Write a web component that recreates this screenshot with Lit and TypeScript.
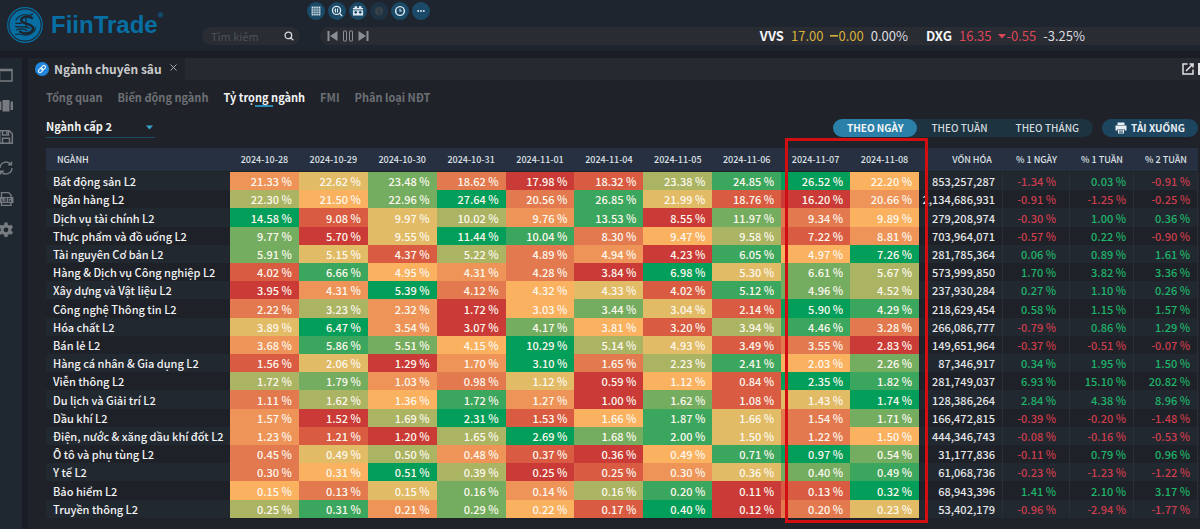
import { LitElement, html, css, svg, nothing } from "lit";
import { customElement, state } from "lit/decorators.js";
import { classMap } from "lit/directives/class-map.js";

interface Sector {
  name: string;
  weights: number[];
  cap: number;
  changes: number[];
}

const DATES = [
  "2024-10-28", "2024-10-29", "2024-10-30", "2024-10-31", "2024-11-01",
  "2024-11-04", "2024-11-05", "2024-11-06", "2024-11-07", "2024-11-08",
];

const sector = (name: string, weights: number[], cap: number, changes: number[]): Sector => ({ name, weights, cap, changes });

const SECTORS: Sector[] = [
  sector("Bất động sản L2", [21.33, 22.62, 23.48, 18.62, 17.98, 18.32, 23.38, 24.85, 26.52, 22.2], 853257287, [-1.34, 0.03, -0.91]),
  sector("Ngân hàng L2", [22.3, 21.5, 22.96, 27.64, 20.56, 26.85, 21.99, 18.76, 16.2, 20.66], 2134686931, [-0.91, -1.25, -0.25]),
  sector("Dịch vụ tài chính L2", [14.58, 9.08, 9.97, 10.02, 9.76, 13.53, 8.55, 11.97, 9.34, 9.89], 279208974, [-0.3, 1.0, 0.36]),
  sector("Thực phẩm và đồ uống L2", [9.77, 5.7, 9.55, 11.44, 10.04, 8.3, 9.47, 9.58, 7.22, 8.81], 703964071, [-0.57, 0.22, -0.9]),
  sector("Tài nguyên Cơ bản L2", [5.91, 5.15, 4.37, 5.22, 4.89, 4.94, 4.23, 6.05, 4.97, 7.26], 281785364, [0.06, 0.89, 1.61]),
  sector("Hàng & Dịch vụ Công nghiệp L2", [4.02, 6.66, 4.95, 4.31, 4.28, 3.84, 6.98, 5.3, 6.61, 5.67], 573999850, [1.7, 3.82, 3.36]),
  sector("Xây dựng và Vật liệu L2", [3.95, 4.31, 5.39, 4.12, 4.32, 4.33, 4.02, 5.12, 4.96, 4.52], 237930284, [0.27, 1.1, 0.26]),
  sector("Công nghệ Thông tin L2", [2.22, 3.23, 2.32, 1.72, 3.03, 3.44, 3.04, 2.14, 5.9, 4.29], 218629454, [0.58, 1.15, 1.57]),
  sector("Hóa chất L2", [3.89, 6.47, 3.54, 3.07, 4.17, 3.81, 3.2, 3.94, 4.46, 3.28], 266086777, [-0.79, 0.86, 1.29]),
  sector("Bán lẻ L2", [3.68, 5.86, 5.51, 4.15, 10.29, 5.14, 4.93, 3.49, 3.55, 2.83], 149651964, [-0.37, -0.51, -0.07]),
  sector("Hàng cá nhân & Gia dụng L2", [1.56, 2.06, 1.29, 1.7, 3.1, 1.65, 2.23, 2.41, 2.03, 2.26], 87346917, [0.34, 1.95, 1.5]),
  sector("Viễn thông L2", [1.72, 1.79, 1.03, 0.98, 1.122, 0.59, 1.118, 0.84, 2.35, 1.82], 281749037, [6.93, 15.1, 20.82]),
  sector("Du lịch và Giải trí L2", [1.11, 1.618, 1.36, 1.72, 1.27, 1.0, 1.622, 1.08, 1.43, 1.74], 128386264, [2.84, 4.38, 8.96]),
  sector("Dầu khí L2", [1.57, 1.52, 1.69, 2.31, 1.53, 1.658, 1.87, 1.662, 1.54, 1.71], 166472815, [-0.39, -0.2, -1.48]),
  sector("Điện, nước & xăng dầu khí đốt L2", [1.23, 1.21, 1.2, 1.65, 2.69, 1.68, 2.0, 1.502, 1.22, 1.498], 444346743, [-0.08, -0.16, -0.53]),
  sector("Ô tô và phụ tùng L2", [0.45, 0.492, 0.5, 0.48, 0.37, 0.36, 0.488, 0.71, 0.97, 0.54], 31177836, [-0.11, 0.79, 0.96]),
  sector("Y tế L2", [0.298, 0.31, 0.51, 0.39, 0.248, 0.252, 0.302, 0.36, 0.4, 0.49], 61068736, [-0.23, -1.23, -1.22]),
  sector("Bảo hiểm L2", [0.148, 0.132, 0.152, 0.162, 0.14, 0.158, 0.2, 0.11, 0.128, 0.32], 68943396, [1.41, 2.1, 3.17]),
  sector("Truyền thông L2", [0.25, 0.31, 0.21, 0.29, 0.22, 0.17, 0.4, 0.12, 0.2, 0.23], 53402179, [-0.96, -2.94, -1.77]),
];

/* Position of each value among its row's values, lowest first. */
const ranks = (values: number[]) => values.map((v) => values.filter((o) => o < v).length);

const FONT = css`"Noto Sans CJK SC", "Noto Sans", sans-serif`;

const toolIcons = [
  { label: "Bảng giá", off: false, art: svg`<path fill="#dfe9ef" d="M3 3h10v10H3z"/><path stroke="#1b4a68" stroke-width=".8" d="M3 5.6h10M3 8.1h10M3 10.6h10M5.5 3v10M8 3v10M10.5 3v10"/>` },
  { label: "Tra cứu", off: false, art: svg`<g fill="none" stroke="#dfe9ef" stroke-width="1.5"><circle cx="7.5" cy="7.3" r="4.6"/><path d="M10.9 10.7l3 3"/><path stroke-width="1.2" d="M6.2 5v4.600M8.600 5v4.600M5.200 7.200h1.800"/></g>` },
  { label: "Bộ lọc", off: false, art: svg`<path fill="#dfe9ef" d="M4 2.500h3v2h2v-2h3v2h1.800v8.600H2.200V4.500H4z"/><circle cx="5.400" cy="9.500" r="1.500" fill="#1b4a68"/><circle cx="10.600" cy="9.500" r="1.500" fill="#1b4a68"/><path stroke="#1b4a68" d="M2.200 6.700h11.600"/>` },
  { label: "Thông tin", off: true, art: svg`<circle cx="8" cy="8" r="4.800" fill="#3a4149"/><path stroke="#1d3343" stroke-width="1.400" d="M8 5v1.400M8 7.300v4"/>` },
  { label: "Lịch sử", off: false, art: svg`<g fill="none" stroke="#dfe9ef" stroke-width="1.700"><circle cx="8" cy="8" r="5"/><path stroke-width="1.200" d="M8 5.500V8h2"/></g>` },
  { label: "Thêm", off: false, art: svg`<g fill="#dfe9ef"><circle cx="4.800" cy="8" r="1.100"/><circle cx="8" cy="8" r="1.100"/><circle cx="11.200" cy="8" r="1.100"/></g>` },
];

const sideIcons = [
  { label: "Cửa sổ", art: svg`<path fill="none" stroke="currentColor" stroke-width="1.500" d="M1.500 2.500h12.500v11.500H1.500zM1.500 3.400h12.500"/>` },
  { label: "Bố cục", art: svg`<path fill="currentColor" d="M4.500 2h7v11.500h-7zM1 3.500h2.400v8.500H1zM12.600 3.500H15v8.500h-2.400z"/>` },
  { label: "Lưu", art: svg`<g fill="none" stroke="currentColor" stroke-width="1.500"><path d="M1.700 1.700h9.600l3 3v9.600H1.700z"/><path d="M4.500 2v4h6V2M4.500 14V9.200h7V14M8.800 2.500v2.200"/></g>` },
  { label: "Làm mới", art: svg`<g fill="none" stroke="currentColor" stroke-width="1.400"><path d="M2 8a6.100 6.100 0 0 1 10.800-3.700M14 8A6.100 6.100 0 0 1 3.200 11.700"/><path d="M13.500 1.500v3.300h-3.300M2.500 14.500v-3.300h3.300"/></g>` },
  { label: "Nhật ký", art: svg`<path fill="none" stroke="currentColor" stroke-width="1.400" d="M3.500 6V1.600h7l2.500 2.500V6M3.500 12v2.400H13V12"/><path fill="currentColor" d="M1 6h14.500v6H1z"/><path fill="none" stroke="#1f2731" stroke-width=".800" d="M4 7.500v3h1.800M7 7.500h1.500v3H7zM12.500 7.500h-2v3h2V9"/>` },
  { label: "Cài đặt", art: svg`<path fill="currentColor" fill-rule="evenodd" d="M6.500 .600h3l.4 2.100 1.500.9 2.100-.8 1.500 2.600-1.700 1.400v2l1.700 1.400-1.500 2.600-2.100-.8-1.500.9-.4 2.100h-3l-.4-2.100-1.500-.9-2.100.8L1 10.200l1.700-1.400v-2L1 5.400l1.500-2.600 2.100.8 1.500-.9zM8 5.400A2.400 2.400 0 1 0 8 10.200 2.400 2.400 0 1 0 8 5.400z"/>` },
];

@customElement("trade-header")
class TradeHeader extends LitElement {
  static styles = css`
    :host { display: flex; align-items: flex-start; height: 51px; background: #1e252f; overflow: hidden; }
    button { font: inherit; color: inherit; background: none; border: 0; padding: 0; margin: 0; }
    svg { display: block; }
    .brand { display: flex; align-items: center; gap: 8px; width: 195px; padding: 6px 0 0 7px; text-decoration: none; color: #076fa3; flex: none; }
    .wordmark { font: bold 24px/38px "Liberation Sans", sans-serif; display: flex; }
    .reg { font-size: 8px; line-height: 16px; padding-top: 2px; }
    .body { flex: 1; min-width: 0; display: flex; flex-direction: column; gap: 7px; padding-top: 2px; }
    .tools { display: flex; gap: 3px; padding-left: 105px; }
    .tool { width: 18px; height: 18px; border-radius: 50%; background: #1b4a68; display: grid; place-items: center; }
    .off { background: #1d3343; }
    .bar { display: flex; gap: 20px; }
    .search { display: flex; align-items: center; width: 98px; height: 18px; border-radius: 9px; background: #292c33; flex: none; }
    .field { flex: 1; min-width: 0; border: 0; outline: 0; background: none; color: #c5c8cc; font: inherit; line-height: 18px; padding: 0 0 0 9px; }
    .field::placeholder { color: #4d5156; opacity: 1; }
    .go { width: 23px; display: grid; place-items: center; }
    .ticker { flex: 1; min-width: 0; display: flex; align-items: center; height: 18px; border-radius: 9px 0 0 9px; background: #292c33; padding: 0 115px 0 7px; }
    .controls { display: flex; gap: 4px; flex: 1; color: #8b8e92; }
    .quotes { display: flex; gap: 18px; font-size: 13px; line-height: 18px; color: #dcdee0; white-space: nowrap; }
    .quote { display: flex; gap: 7px; }
    .code { font-weight: bold; color: #f4f5f6; }
    .move { display: flex; align-items: center; }
    .flat { color: #d9b13c; }
    .down { color: #dd4557; }
  `;

  render() {
    return html`
      <a class="brand" href="#" aria-label="FiinTrade">
        <svg width="36" height="36" viewBox="0 0 36 36">
          <circle cx="18" cy="18" r="17.300" fill="none" stroke="#076fa3" stroke-width="1.200"/>
          <circle cx="18" cy="18" r="15.600" fill="#076fa3"/>
          <g fill="none" stroke="#1b2630" stroke-linecap="round" stroke-linejoin="round">
            <path stroke-width="2.400" d="M25 11c-3-2-9-1.500-10.500 1-1.300 2.700 2.200 3.800 5.500 4.800 4.600 1.300 7.600 3.400 5.200 7-2.400 3.300-8.600 3.400-12.200.8"/>
            <path stroke-width="1.200" d="M9 13c2.800-4.500 7.400-6 12-4.800 2 .4 3.500-.2 4.800-1.400M8.500 19.400c3.500 1.400 9.300-.9 14.300 1.800M9.500 23c3.400-1.600 7.300-1.300 10.500.6M8.500 27.500c4.400-2 7.500 1.800 12.500.4 4.300-1.200 7.500-3.800 7.300-7.500M19 11v10M9 16.400h5.500"/>
          </g>
        </svg>
        <span class="wordmark">FiinTrade<span class="reg">®</span></span>
      </a>
      <div class="body">
        <div class="tools">
          ${toolIcons.map((t) => html`
            <button class=${classMap({ tool: true, off: t.off })} aria-label=${t.label}>
              <svg width="14" height="14" viewBox="0 0 16 16">${t.art}</svg>
            </button>`)}
        </div>
        <div class="bar">
          <div class="search">
            <input class="field" type="search" placeholder="Tìm kiếm" aria-label="Tìm kiếm" />
            <button class="go" aria-label="Tìm">
              <svg width="10" height="10" viewBox="0 0 10 10" fill="none" stroke="#d5d8da" stroke-width="1.300"><circle cx="4.400" cy="4.400" r="3.300"/><path d="M6.900 6.900L9.300 9.300"/></svg>
            </button>
          </div>
          <div class="ticker">
            <div class="controls">
              <button aria-label="Trước"><svg width="11" height="12" viewBox="0 0 11 12" fill="currentColor"><path d="M.500 1h2v10h-2zM10.500 1v10L3 6z"/></svg></button>
              <button aria-label="Tạm dừng"><svg width="12" height="12" viewBox="0 0 12 12" fill="none" stroke="currentColor"><rect x="1.500" y="1" width="3" height="10" rx=".500"/><rect x="7.500" y="1" width="3" height="10" rx=".500"/></svg></button>
              <button aria-label="Sau"><svg width="11" height="12" viewBox="0 0 11 12" fill="currentColor"><path d="M8.500 1h2v10h-2zM.500 1v10L8 6z"/></svg></button>
            </div>
            <div class="quotes">
              <div class="quote">
                <span class="code">VVS</span><span class="flat">17.00</span>
                <span class="move flat"><svg width="8" height="10" viewBox="0 0 8 10"><path d="M0 4h8v1.600H0z" fill="currentColor"/></svg>0.00</span>
                <span>0.00%</span>
              </div>
              <div class="quote">
                <span class="code">DXG</span><span class="down">16.35</span>
                <span class="move down"><svg width="8" height="10" viewBox="0 0 8 10"><path d="M0 3h8L4 7.500z" fill="currentColor"/></svg>-0.55</span>
                <span>-3.25%</span>
              </div>
            </div>
          </div>
        </div>
      </div>
    `;
  }
}

@customElement("weight-table")
class WeightTable extends LitElement {
  static styles = css`
    :host { display: flex; position: relative; flex: 1; }
    .grid { width: 100%; table-layout: fixed; border-collapse: separate; border-spacing: 0; font-size: 11px; line-height: 16px; color: #e4e6e8; white-space: nowrap; }
    .c-name { width: 184px; }
    .c-cap { width: 84px; }
    .c-wide { width: 67px; }
    .c-change { width: 64px; }
    th, td { padding: 0; }
    .head { height: 23px; background: #263041; color: #dfe2e6; font-size: 9px; font-weight: 500; line-height: 16px; text-align: center; border-bottom: 1px solid #1f2228; }
    .first { text-align: left; padding-left: 11px; }
    .cap { padding-left: 22px; }
    .row:nth-child(odd) { background: #222830; }
    .row:nth-child(even) { background: #1e2127; }
    .name { text-align: left; font-weight: 500; color: #f2f3f4; padding-left: 7px; }
    .num { text-align: right; padding-right: 7px; font-weight: 500; }
    .edge { border-right: 1px solid #2a2f37; }
    .wide { padding-right: 13px; }
    .up { color: #1fb46a; }
    .down { color: #cc3d4d; }
    .cell { color: #fdf8ee; }
    .r0 { background: #ca3a36; }
    .r1 { background: #d95b42; }
    .r2 { background: #e3794e; }
    .r3 { background: #ee9458; }
    .r4 { background: #fab160; }
    .r5 { background: #e1bb65; }
    .r6 { background: #aab462; }
    .r7 { background: #74ad60; }
    .r8 { background: #3ba65d; }
    .r9 { background: #029e5a; }
    .marker { position: absolute; top: -10px; bottom: -5px; left: 739px; width: 137px; border: 3px solid #d00f12; pointer-events: none; }
  `;

  render() {
    return html`
      <table class="grid">
        <colgroup>
          <col class="c-name" />
          ${DATES.map(() => html`<col />`)}
          <col class="c-cap" /><col class="c-wide" /><col class="c-change" /><col class="c-change" />
        </colgroup>
        <thead>
          <tr>
            <th class="head first" scope="col">NGÀNH</th>
            ${DATES.map((d) => html`<th class="head" scope="col">${d}</th>`)}
            <th class="head cap" scope="col">VỐN HÓA</th>
            <th class="head" scope="col">% 1 NGÀY</th>
            <th class="head" scope="col">% 1 TUẦN</th>
            <th class="head" scope="col">% 2 TUẦN</th>
          </tr>
        </thead>
        <tbody>
          ${SECTORS.map((s) => {
            const order = ranks(s.weights);
            return html`<tr class="row">
              <th class="name" scope="row">${s.name}</th>
              ${s.weights.map((w, i) => html`<td class="num cell r${order[i]}">${w.toFixed(2)} %</td>`)}
              <td class="num edge">${s.cap.toLocaleString("en-US")}</td>
              ${s.changes.map((c, i) => html`<td class=${classMap({ num: true, edge: true, wide: i === 0, up: c > 0, down: c < 0 })}>${c.toFixed(2)} %</td>`)}
            </tr>`;
          })}
        </tbody>
      </table>
      <div class="marker"></div>
    `;
  }
}

@customElement("app-root")
class AppRoot extends LitElement {
  @state() private view = "Tỷ trọng ngành";
  @state() private period = "THEO NGÀY";

  static styles = css`
    :host { display: flex; flex-direction: column; gap: 7px; min-height: 100vh; box-sizing: border-box; background: #1a1d26; overflow: hidden; color: #e4e6e8; font: 11px/16px ${FONT}; }
    button, select { font: inherit; color: inherit; background: none; border: 0; padding: 0; margin: 0; }
    svg { display: block; }
    .content { flex: 1; display: flex; gap: 6px; }
    .side { width: 22px; flex: none; background: #1f2731; color: #777b80; display: flex; flex-direction: column; gap: 15px; padding-top: 9px; overflow: hidden; }
    .tool { margin-left: -2px; width: 16px; height: 16px; }
    .main { flex: 1; min-width: 0; display: flex; flex-direction: column; background: #1f2228; }
    .tabs { height: 22px; display: flex; background: #262930; }
    .tab { display: flex; align-items: center; gap: 5px; width: 157px; padding-left: 7px; box-sizing: border-box; background: #202329; font-size: 12px; font-weight: bold; line-height: 22px; color: #c9cbcd; white-space: nowrap; }
    .close { align-self: flex-start; padding-top: 6px; margin-left: 3px; }
    .window { margin-left: auto; display: flex; align-items: center; gap: 4px; overflow: hidden; width: 18px; color: #e0e2e4; }
    .window svg { flex: none; }
    .inner { flex: 1; display: flex; flex-direction: column; padding: 8px 2px 11px 18px; }
    .nav { display: flex; gap: 15px; }
    .link { position: relative; font-size: 11px; line-height: 18px; font-weight: bold; color: #6d7075; text-decoration: none; white-space: nowrap; }
    .current { color: #f2f3f4; }
    .current::after { content: ""; position: absolute; left: 50%; bottom: -1px; width: 18px; height: 2px; margin-left: -9px; background: #2a8db8; }
    .toolbar { display: flex; align-items: center; gap: 9px; padding: 11px 0 10px; }
    .level { position: relative; width: 109px; margin-right: auto; }
    .pick { appearance: none; display: block; box-sizing: border-box; width: 100%; height: 21px; font-size: 11px; font-weight: bold; line-height: 18px; color: #f2f3f4; padding-bottom: 2px; border-bottom: 1px solid #1d4a5c; outline: 0; }
    .pick option { background: #1f2228; }
    .caret { position: absolute; right: 2px; top: 8px; pointer-events: none; }
    .periods { display: flex; border-radius: 9px; background: #1d3340; }
    .period { height: 18px; padding: 0 14px; border-radius: 9px; font-size: 10px; font-weight: 500; line-height: 18px; color: #d3dade; }
    .on { background: #2a80a8; color: #f4f7f9; font-weight: bold; }
    .export { display: flex; align-items: center; justify-content: center; gap: 4px; width: 96px; height: 18px; border-radius: 9px; background: #1d4560; font-size: 10px; font-weight: bold; line-height: 18px; color: #e8eef2; }
  `;

  render() {
    return html`
      <trade-header></trade-header>
      <div class="content">
        <nav class="side" aria-label="Công cụ">
          ${sideIcons.map((i) => html`<button class="tool" aria-label=${i.label}><svg width="16" height="16" viewBox="0 0 16 16">${i.art}</svg></button>`)}
        </nav>
        <main class="main">
          <div class="tabs">
            <div class="tab">
              <svg width="14" height="14" viewBox="0 0 14 14"><circle cx="7" cy="7" r="7" fill="#2287dc"/><g fill="none" stroke="#e8f2fa" stroke-width="1.200" transform="rotate(-45 7 7)"><rect x="2.600" y="5.400" width="5" height="3.200" rx="1.600"/><rect x="6.400" y="5.400" width="5" height="3.200" rx="1.600"/></g></svg>
              <span>Ngành chuyên sâu</span>
              <button class="close" aria-label="Đóng"><svg width="7" height="7" viewBox="0 0 7 7" stroke="#b9bbbe" stroke-width=".900"><path d="M.500.500l6 6M6.500.500l-6 6"/></svg></button>
            </div>
            <div class="window">
              <svg width="12" height="12" viewBox="0 0 12 12" fill="none" stroke="currentColor" stroke-width="1.500"><path d="M5.500 1H1v10h10V6.500M7.500 1H11v3.500M11 1L4 8"/></svg>
              <svg width="12" height="12" viewBox="0 0 12 12" fill="none" stroke="currentColor" stroke-width="2"><path d="M1 1h10v10H1z"/></svg>
            </div>
          </div>
          <div class="inner">
            <nav class="nav">
              ${["Tổng quan", "Biến động ngành", "Tỷ trọng ngành", "FMI", "Phân loại NĐT"].map((v) => html`
                <a href="#" class=${classMap({ link: true, current: v === this.view })}
                  aria-current=${v === this.view ? "page" : nothing}
                  @click=${(e: Event) => { e.preventDefault(); this.view = v; }}>${v}</a>`)}
            </nav>
            <div class="toolbar">
              <div class="level">
                <select class="pick" aria-label="Cấp ngành"><option>Ngành cấp 2</option></select>
                <svg class="caret" width="7" height="5" viewBox="0 0 7 5"><path d="M0 .500h7L3.500 4.500z" fill="#35a5cf"/></svg>
              </div>
              <div class="periods">
                ${["THEO NGÀY", "THEO TUẦN", "THEO THÁNG"].map((p) => html`
                  <button class=${classMap({ period: true, on: p === this.period })} @click=${() => (this.period = p)}>${p}</button>`)}
              </div>
              <button class="export">
                <svg width="12" height="12" viewBox="0 0 12 12"><path fill="#e8eef2" d="M2.500.500h7V3h-7zM.500 3.600h11v5H9.500V7h-7v1.600h-2zM3 7.600h6v4H3z"/><path stroke="#1d4560" stroke-width=".800" d="M4 9h4M4 10.300h4"/></svg>
                TẢI XUỐNG
              </button>
            </div>
            <weight-table></weight-table>
          </div>
        </main>
      </div>
    `;
  }
}
